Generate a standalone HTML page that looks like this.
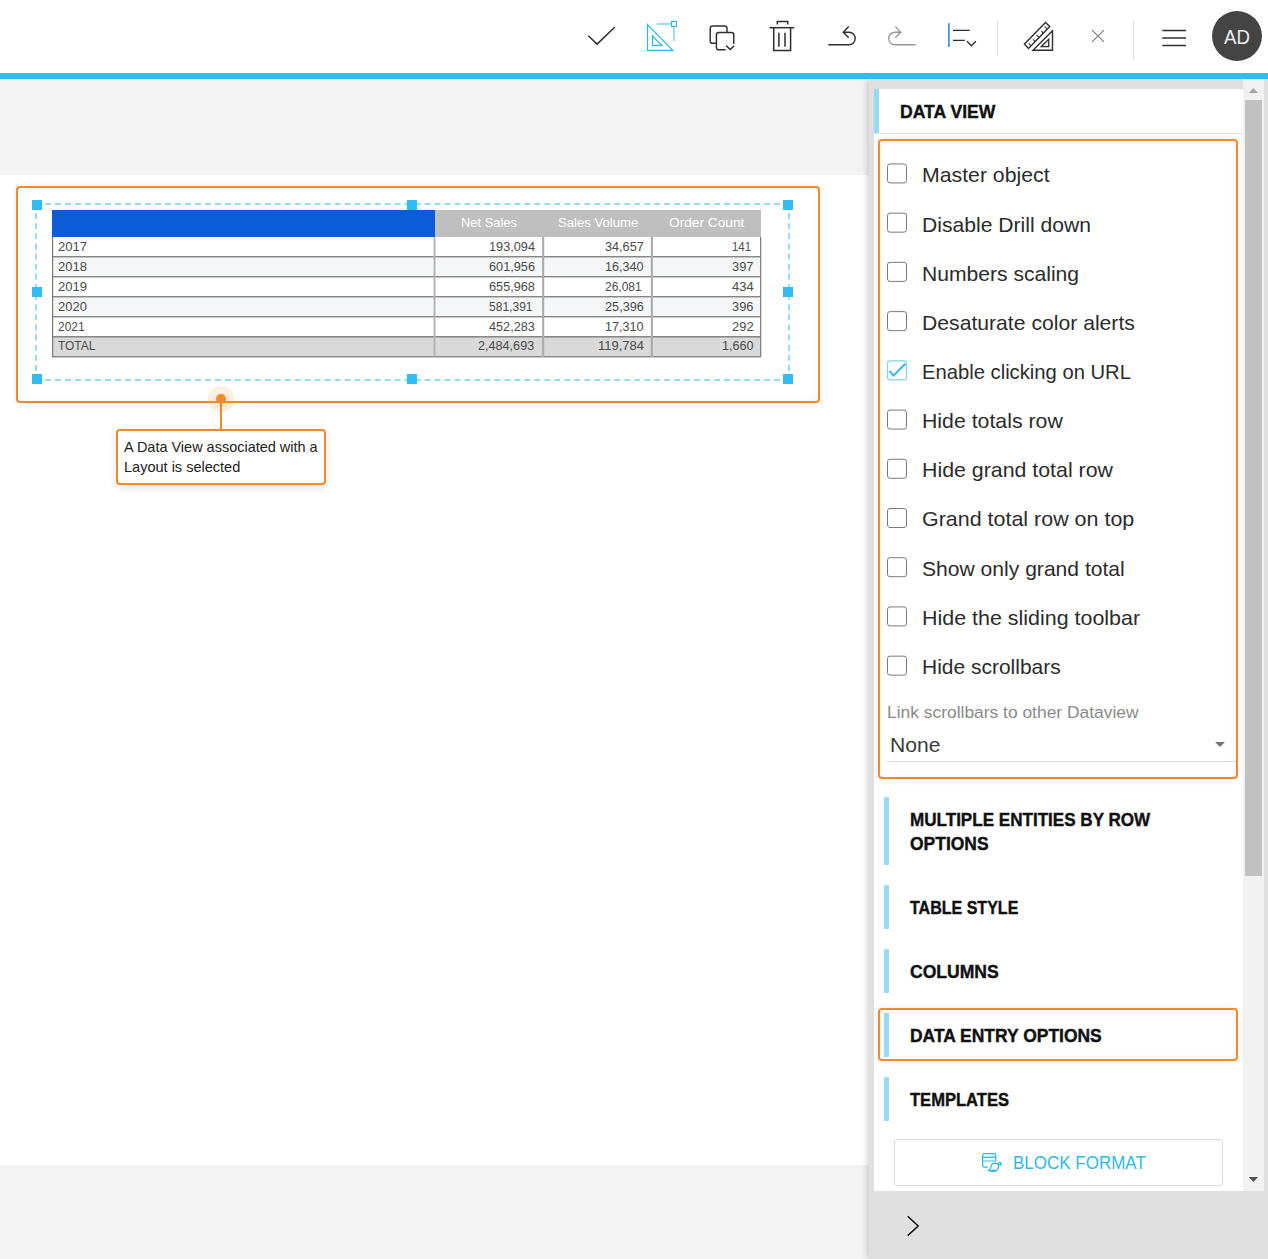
<!DOCTYPE html>
<html lang="en"><head><meta charset="utf-8"><title>Data View</title>
<style>
html,body{margin:0;padding:0;}
body{width:1268px;height:1259px;position:relative;overflow:hidden;background:#fff;font-family:"Liberation Sans",sans-serif;}
.t{position:absolute;white-space:nowrap;margin:0;padding:0;transform-origin:0 0;}
.a{position:absolute;}
svg{position:absolute;overflow:visible;}
</style></head><body>
<div class="a" style="left:0;top:79px;width:869px;height:96px;background:#f3f3f3"></div>
<div class="a" style="left:0;top:1165px;width:869px;height:94px;background:#f3f3f3"></div>
<div class="a" style="left:869px;top:79px;width:399px;height:1180px;background:#e0e0e0;box-shadow:-1px 0 7px rgba(0,0,0,0.22)"></div>
<div class="a" style="left:874px;top:89px;width:369px;height:1102px;background:#fff"></div>
<div class="a" style="left:1243px;top:79px;width:21px;height:1112px;background:#f1f1f1"></div>
<div class="a" style="left:1245px;top:100px;width:17px;height:776px;background:#c1c1c1"></div>
<svg style="left:1243px;top:79px" width="21" height="1112"><path d="M5.8 13.9 L15 13.9 L10.4 8.9 Z" fill="#a3a3a3"/><path d="M5.8 1098 L15 1098 L10.4 1103 Z" fill="#505050"/></svg>
<div class="a" style="left:0;top:0;width:1268px;height:73px;background:#fff"></div>
<div class="a" style="left:0;top:73px;width:1268px;height:6px;background:#2fbdf1"></div>
<svg style="left:0;top:0" width="1268" height="73" fill="none" stroke-linecap="butt">
<path d="M588.3 35.8 L597.1 44.1 L614.9 27" stroke="#2e2e2e" stroke-width="1.5"/>
<path d="M647.5 24.5 L647.5 50.45 L672.8 50.45 Z" stroke="#2fb8ea" stroke-width="1.2" stroke-linejoin="miter"/>
<path d="M652.4 36 L652.4 45.4 L661.8 45.4 Z" stroke="#2fb8ea" stroke-width="1.2"/>
<path d="M656.8 23.95 L671 23.95 M674 26.9 L674 41.1" stroke="#9adcf6" stroke-width="1.9"/>
<rect x="671.5" y="21.45" width="5" height="5" stroke="#2fb8ea" stroke-width="1.15"/>
<path d="M716.2 43.3 L712.6 43.3 Q710.2 43.3 710.2 40.9 L710.2 28.4 Q710.2 26 712.6 26 L724.6 26 Q727 26 727 28.4 L727 32" stroke="#2e2e2e" stroke-width="1.45"/>
<path d="M725.7 49.8 L718.8 49.8 Q716.4 49.8 716.4 47.4 L716.4 34.8 Q716.4 32.4 718.8 32.4 L731.4 32.4 Q733.8 32.4 733.8 34.8 L733.8 44" stroke="#2e2e2e" stroke-width="1.45"/>
<path d="M726 45.5 L730.2 49.6 L734.2 45.8" stroke="#2e2e2e" stroke-width="1.4"/>
<path d="M777.3 24.6 L777.3 21.6 L787.7 21.6 L787.7 24.6" stroke="#2e2e2e" stroke-width="1.5"/>
<path d="M769.4 27.7 L794.3 27.7" stroke="#2e2e2e" stroke-width="1.5"/>
<path d="M773.7 27.7 L773.7 50.4 L790.6 50.4 L790.6 27.7" stroke="#2e2e2e" stroke-width="1.5"/>
<path d="M778.9 32.7 L778.9 46.8 M785 32.7 L785 46.8" stroke="#2e2e2e" stroke-width="1.5"/>
<path d="M828.35 44.75 L848.9 44.75 A6.27 6.27 0 0 0 848.9 32.2 L843.8 32.2" stroke="#2e2e2e" stroke-width="1.4"/>
<path d="M848.7 26.6 L843.3 32.2 L848.7 37.8" stroke="#2e2e2e" stroke-width="1.4"/>
<path d="M915.7 44.75 L894.95 44.75 A6.27 6.27 0 0 1 894.95 32.2 L900.2 32.2" stroke="#969696" stroke-width="1.35"/>
<path d="M895.35 26.65 L900.75 32.15 L895.35 37.75" stroke="#969696" stroke-width="1.35"/>
<path d="M948.9 23.2 L948.9 47" stroke="#4a9ddd" stroke-width="1.9"/>
<path d="M953 30.35 L969.7 30.35 M953 40.4 L964.8 40.4" stroke="#2e2e2e" stroke-width="1.4"/>
<path d="M967 41.3 L971.4 45.7 L975.8 41.3" stroke="#2e2e2e" stroke-width="1.4"/>
<path d="M997.5 21 L997.5 56 M1133.5 21 L1133.5 60" stroke="#dcdcdc" stroke-width="1"/>
<path d="M1024.4 44.1 L1045.5 22.4 L1049.8 26.5 L1028.5 48.5 Z" stroke="#2e2e2e" stroke-width="1.4" stroke-linejoin="miter"/>
<path d="M1030.9 45.6 L1028.7 43.4 M1035.2 41.4 L1033 39.4 M1039 37.3 L1036.6 34.8 M1043.4 33.2 L1041.4 31.2 M1046.9 28.7 L1044.6 26.6" stroke="#2e2e2e" stroke-width="1.1"/>
<path d="M1033 50.3 L1052.5 50.3 L1052.5 30.8 Z" stroke="#2e2e2e" stroke-width="1.4"/>
<path d="M1041.2 46.7 L1048.7 46.7 L1048.7 39.2 Z" stroke="#2e2e2e" stroke-width="1.3"/>
<path d="M1092.1 30.1 L1103.9 41.9 M1103.9 30.1 L1092.1 41.9" stroke="#7c7c7c" stroke-width="1.1"/>
<path d="M1162.3 30.6 L1186 30.6 M1162.3 38 L1186 38 M1162.3 45.4 L1186 45.4" stroke="#2e2e2e" stroke-width="1.5"/>
<circle cx="1237" cy="36" r="25" fill="#444" stroke="none"/>
</svg>
<div class="t" style="left:1224.15px;top:22px;font-size:20.8px;line-height:29px;color:#ececec;transform:scaleX(0.8969);">AD</div>
<div class="a" style="left:874px;top:89px;width:5px;height:44px;background:#96daf5"></div>
<div class="a" style="left:874px;top:133px;width:369px;height:1px;background:#e4e4e4"></div>
<div class="t" style="left:899.76px;top:99px;font-size:18.7px;line-height:26px;font-weight:700;color:#111;transform:scaleX(0.9412);-webkit-text-stroke:0.4px #111;">DATA VIEW</div>
<div class="a" style="left:878px;top:139px;width:356px;height:636px;border:2px solid #f08a2d;border-radius:4px;box-shadow:0 0 8px rgba(0,0,0,0.08), inset 0 0 8px rgba(0,0,0,0.05)"></div>
<svg style="left:0;top:0" width="1268" height="800" fill="none">
<rect x="887.5" y="163.95" width="19" height="19" rx="2.5" stroke="#7a7a7a" stroke-width="1" fill="#fff"/>
<rect x="887.5" y="213.17" width="19" height="19" rx="2.5" stroke="#7a7a7a" stroke-width="1" fill="#fff"/>
<rect x="887.5" y="262.39" width="19" height="19" rx="2.5" stroke="#7a7a7a" stroke-width="1" fill="#fff"/>
<rect x="887.5" y="311.61" width="19" height="19" rx="2.5" stroke="#7a7a7a" stroke-width="1" fill="#fff"/>
<rect x="887.5" y="360.83" width="19" height="19" rx="2.5" stroke="#7fd4f4" stroke-width="1.2" fill="#fff"/>
<path d="M889.4 370.93 L893.5 375.63 L905.3 363.73" stroke="#2fb8ea" stroke-width="2"/>
<rect x="887.5" y="410.05" width="19" height="19" rx="2.5" stroke="#7a7a7a" stroke-width="1" fill="#fff"/>
<rect x="887.5" y="459.27" width="19" height="19" rx="2.5" stroke="#7a7a7a" stroke-width="1" fill="#fff"/>
<rect x="887.5" y="508.49" width="19" height="19" rx="2.5" stroke="#7a7a7a" stroke-width="1" fill="#fff"/>
<rect x="887.5" y="557.71" width="19" height="19" rx="2.5" stroke="#7a7a7a" stroke-width="1" fill="#fff"/>
<rect x="887.5" y="606.93" width="19" height="19" rx="2.5" stroke="#7a7a7a" stroke-width="1" fill="#fff"/>
<rect x="887.5" y="656.15" width="19" height="19" rx="2.5" stroke="#7a7a7a" stroke-width="1" fill="#fff"/>
</svg>
<div class="t" style="left:921.70px;top:160px;font-size:20.9px;line-height:29px;color:#2b2b2b;transform:scaleX(1.0176);">Master object</div>
<div class="t" style="left:921.71px;top:210px;font-size:20.9px;line-height:29px;color:#2b2b2b;transform:scaleX(1.0109);">Disable Drill down</div>
<div class="t" style="left:921.71px;top:259px;font-size:20.9px;line-height:29px;color:#2b2b2b;transform:scaleX(1.0094);">Numbers scaling</div>
<div class="t" style="left:921.71px;top:308px;font-size:20.9px;line-height:29px;color:#2b2b2b;transform:scaleX(1.0129);">Desaturate color alerts</div>
<div class="t" style="left:921.78px;top:357px;font-size:20.9px;line-height:29px;color:#2b2b2b;transform:scaleX(0.9673);">Enable clicking on URL</div>
<div class="t" style="left:921.70px;top:406px;font-size:20.9px;line-height:29px;color:#2b2b2b;transform:scaleX(1.0188);">Hide totals row</div>
<div class="t" style="left:921.69px;top:455px;font-size:20.9px;line-height:29px;color:#2b2b2b;transform:scaleX(1.0214);">Hide grand total row</div>
<div class="t" style="left:921.63px;top:504px;font-size:20.9px;line-height:29px;color:#2b2b2b;transform:scaleX(1.0269);">Grand total row on top</div>
<div class="t" style="left:921.55px;top:554px;font-size:20.9px;line-height:29px;color:#2b2b2b;transform:scaleX(1.0093);">Show only grand total</div>
<div class="t" style="left:921.68px;top:603px;font-size:20.9px;line-height:29px;color:#2b2b2b;transform:scaleX(1.0261);">Hide the sliding toolbar</div>
<div class="t" style="left:921.72px;top:652px;font-size:20.9px;line-height:29px;color:#2b2b2b;transform:scaleX(1.0044);">Hide scrollbars</div>
<div class="t" style="left:887.21px;top:700px;font-size:17.2px;line-height:24px;color:#8a8a8a;transform:scaleX(1.0127);">Link scrollbars to other Dataview</div>
<div class="t" style="left:889.51px;top:730px;font-size:20.9px;line-height:29px;color:#3a3a3a;transform:scaleX(1.0094);">None</div>
<div class="a" style="left:887px;top:761px;width:349px;height:1px;background:#d9d9d9"></div>
<svg style="left:1215px;top:741.5px" width="10" height="5"><path d="M0 0 L10 0 L5 5 Z" fill="#757575"/></svg>
<div class="a" style="left:878px;top:1008px;width:356px;height:49px;border:2px solid #f08a2d;border-radius:4px;box-shadow:0 0 8px rgba(0,0,0,0.08), inset 0 0 8px rgba(0,0,0,0.05)"></div>
<div class="a" style="left:884px;top:797px;width:5px;height:68px;background:#96daf5"></div>
<div class="t" style="left:909.89px;top:808px;font-size:18.2px;line-height:25px;font-weight:700;color:#111;transform:scaleX(0.9385);-webkit-text-stroke:0.4px #111;">MULTIPLE ENTITIES BY ROW</div>
<div class="t" style="left:910.10px;top:832px;font-size:18.2px;line-height:25px;font-weight:700;color:#111;transform:scaleX(0.9598);-webkit-text-stroke:0.4px #111;">OPTIONS</div>
<div class="a" style="left:884px;top:885px;width:5px;height:44px;background:#96daf5"></div>
<div class="t" style="left:909.94px;top:896px;font-size:18.2px;line-height:25px;font-weight:700;color:#111;transform:scaleX(0.8812);-webkit-text-stroke:0.4px #111;">TABLE STYLE</div>
<div class="a" style="left:884px;top:949px;width:5px;height:44px;background:#96daf5"></div>
<div class="t" style="left:909.70px;top:960px;font-size:18.2px;line-height:25px;font-weight:700;color:#111;transform:scaleX(0.9654);-webkit-text-stroke:0.4px #111;">COLUMNS</div>
<div class="a" style="left:884px;top:1013px;width:5px;height:44px;background:#96daf5"></div>
<div class="t" style="left:909.86px;top:1024px;font-size:18.2px;line-height:25px;font-weight:700;color:#111;transform:scaleX(0.9600);-webkit-text-stroke:0.4px #111;">DATA ENTRY OPTIONS</div>
<div class="a" style="left:884px;top:1077px;width:5px;height:44px;background:#96daf5"></div>
<div class="t" style="left:909.93px;top:1088px;font-size:18.2px;line-height:25px;font-weight:700;color:#111;transform:scaleX(0.9096);-webkit-text-stroke:0.4px #111;">TEMPLATES</div>
<div class="a" style="left:894px;top:1139px;width:327px;height:45px;border:1px solid #dcdcdc;border-radius:3px;background:#fff"></div>
<div class="t" style="left:1013.04px;top:1150px;font-size:18.7px;line-height:26px;color:#2fb8ea;transform:scaleX(0.9094);">BLOCK FORMAT</div>
<svg style="left:0;top:0" width="1268" height="1259" fill="none">
<path d="M987.8 1167.2 L984.4 1167.2 Q982.65 1167.2 982.65 1165.5 L982.65 1155.4 Q982.65 1153.65 984.4 1153.65 L994 1153.65 Q995.7 1153.65 995.7 1155.4 L995.7 1161.2" stroke="#2fb8ea" stroke-width="1.3"/>
<path d="M982.65 1157.2 L995.7 1157.2" stroke="#2fb8ea" stroke-width="1.3"/>
<path d="M982.65 1161 L995.7 1161" stroke="#6fcdf1" stroke-width="1.4"/>
<path d="M988.4 1170.5 Q990.8 1169.6 991 1166.8 Q991.3 1163.4 994.8 1163.1 Q997.6 1163 998.6 1165.2 Q999.2 1167.8 997.2 1169.9 Q994.4 1172.4 988.4 1170.5 Z" stroke="#2fb8ea" stroke-width="1.3" stroke-linejoin="round"/>
<path d="M989.4 1170.6 Q992.6 1169 996.4 1170.4 Q993 1172.2 989.4 1170.6 Z" fill="#2fb8ea" stroke="#2fb8ea" stroke-width="0.6"/>
<circle cx="999.7" cy="1163.7" r="1.35" stroke="#2fb8ea" stroke-width="1.2"/>
<path d="M1000.5 1162.8 L1001.4 1164.2 L1000.4 1165" stroke="#2fb8ea" stroke-width="1"/>
</svg>
<svg style="left:0;top:0" width="1268" height="1259"><path d="M907.7 1216.2 L918.2 1226 L907.7 1235.6" fill="none" stroke="#111" stroke-width="1.5"/></svg>
<div class="a" style="left:16px;top:186px;width:800px;height:213px;border:2px solid #f08a2d;border-radius:4px;box-shadow:0 0 8px rgba(0,0,0,0.08), inset 0 0 8px rgba(0,0,0,0.05)"></div>
<svg style="left:0;top:0" width="869" height="600">
<path d="M45.1 204 L783 204 M45.1 380 L783 380" stroke="#96daf5" stroke-width="2" stroke-dasharray="6 3.986" fill="none"/>
<path d="M36 213 L36 374 M789 213 L789 374" stroke="#96daf5" stroke-width="2" stroke-dasharray="6 4.133" fill="none"/>
<rect x="32" y="200" width="10" height="10" fill="#2fbdf1"/>
<rect x="407" y="200" width="10" height="10" fill="#2fbdf1"/>
<rect x="783" y="200" width="10" height="10" fill="#2fbdf1"/>
<rect x="32" y="287" width="10" height="10" fill="#2fbdf1"/>
<rect x="783" y="287" width="10" height="10" fill="#2fbdf1"/>
<rect x="32" y="374" width="10" height="10" fill="#2fbdf1"/>
<rect x="407" y="374" width="10" height="10" fill="#2fbdf1"/>
<rect x="783" y="374" width="10" height="10" fill="#2fbdf1"/>
</svg>
<div class="a" style="left:52px;top:210px;width:383px;height:27px;background:#0b5cd7"></div>
<div class="a" style="left:435px;top:210px;width:326px;height:27px;background:#bfbfbf"></div>
<div class="a" style="left:52px;top:237px;width:709px;height:20px;background:#fff"></div>
<div class="a" style="left:52px;top:257px;width:709px;height:20px;background:#f5f6f8"></div>
<div class="a" style="left:52px;top:277px;width:709px;height:20px;background:#fff"></div>
<div class="a" style="left:52px;top:297px;width:709px;height:20px;background:#f5f6f8"></div>
<div class="a" style="left:52px;top:317px;width:709px;height:20px;background:#fff"></div>
<div class="a" style="left:52px;top:337px;width:709px;height:20px;background:#d9d9d9"></div>
<div class="a" style="left:52px;top:256px;width:709px;height:1px;background:#858585;box-shadow:0 1px 0 rgba(0,0,0,0.2)"></div>
<div class="a" style="left:52px;top:276px;width:709px;height:1px;background:#858585;box-shadow:0 1px 0 rgba(0,0,0,0.2)"></div>
<div class="a" style="left:52px;top:296px;width:709px;height:1px;background:#858585;box-shadow:0 1px 0 rgba(0,0,0,0.2)"></div>
<div class="a" style="left:52px;top:316px;width:709px;height:1px;background:#858585;box-shadow:0 1px 0 rgba(0,0,0,0.2)"></div>
<div class="a" style="left:52px;top:336px;width:709px;height:1px;background:#858585;box-shadow:0 1px 0 rgba(0,0,0,0.2)"></div>
<div class="a" style="left:52px;top:356px;width:709px;height:1px;background:#858585;box-shadow:0 1px 0 rgba(0,0,0,0.2)"></div>
<svg style="left:0;top:0" width="869" height="400"><rect x="52" y="237" width="1.2" height="120" fill="#7a7a7a"/><rect x="433.6" y="237" width="1.8" height="120" fill="#b0b0b0"/><rect x="542.1" y="237" width="2.1" height="120" fill="#ababab"/><rect x="650.8" y="237" width="2.1" height="120" fill="#ababab"/><rect x="760" y="237" width="1.3" height="120" fill="#808080"/></svg>
<div class="t" style="left:461.37px;top:213px;font-size:13.6px;line-height:19px;color:#fff;transform:scaleX(0.9480);">Net Sales</div>
<div class="t" style="left:557.92px;top:213px;font-size:13.6px;line-height:19px;color:#fff;transform:scaleX(0.9654);">Sales Volume</div>
<div class="t" style="left:669.14px;top:213px;font-size:13.6px;line-height:19px;color:#fff;transform:scaleX(1.0076);">Order Count</div>
<div class="t" style="left:57.93px;top:237px;font-size:13.6px;line-height:19px;color:#4a4a4a;transform:scaleX(0.9604);">2017</div>
<div class="t" style="left:488.83px;top:237px;font-size:13.6px;line-height:19px;color:#4a4a4a;transform:scaleX(0.9369);">193,094</div>
<div class="t" style="left:605.19px;top:237px;font-size:13.6px;line-height:19px;color:#4a4a4a;transform:scaleX(0.9317);">34,657</div>
<div class="t" style="left:732.41px;top:237px;font-size:13.6px;line-height:19px;color:#4a4a4a;transform:scaleX(0.8388);">141</div>
<div class="t" style="left:57.93px;top:257px;font-size:13.6px;line-height:19px;color:#4a4a4a;transform:scaleX(0.9560);">2018</div>
<div class="t" style="left:488.69px;top:257px;font-size:13.6px;line-height:19px;color:#4a4a4a;transform:scaleX(0.9355);">601,956</div>
<div class="t" style="left:605.27px;top:257px;font-size:13.6px;line-height:19px;color:#4a4a4a;transform:scaleX(0.9271);">16,340</div>
<div class="t" style="left:732.23px;top:257px;font-size:13.6px;line-height:19px;color:#4a4a4a;transform:scaleX(0.9457);">397</div>
<div class="t" style="left:57.93px;top:277px;font-size:13.6px;line-height:19px;color:#4a4a4a;transform:scaleX(0.9582);">2019</div>
<div class="t" style="left:488.69px;top:277px;font-size:13.6px;line-height:19px;color:#4a4a4a;transform:scaleX(0.9342);">655,968</div>
<div class="t" style="left:605.03px;top:277px;font-size:13.6px;line-height:19px;color:#4a4a4a;transform:scaleX(0.8820);">26,081</div>
<div class="t" style="left:732.10px;top:277px;font-size:13.6px;line-height:19px;color:#4a4a4a;transform:scaleX(0.9566);">434</div>
<div class="t" style="left:57.93px;top:297px;font-size:13.6px;line-height:19px;color:#4a4a4a;transform:scaleX(0.9559);">2020</div>
<div class="t" style="left:488.98px;top:297px;font-size:13.6px;line-height:19px;color:#4a4a4a;transform:scaleX(0.8858);">581,391</div>
<div class="t" style="left:605.00px;top:297px;font-size:13.6px;line-height:19px;color:#4a4a4a;transform:scaleX(0.9348);">25,396</div>
<div class="t" style="left:732.24px;top:297px;font-size:13.6px;line-height:19px;color:#4a4a4a;transform:scaleX(0.9427);">396</div>
<div class="t" style="left:57.98px;top:317px;font-size:13.6px;line-height:19px;color:#4a4a4a;transform:scaleX(0.8839);">2021</div>
<div class="t" style="left:488.62px;top:317px;font-size:13.6px;line-height:19px;color:#4a4a4a;transform:scaleX(0.9341);">452,283</div>
<div class="t" style="left:605.27px;top:317px;font-size:13.6px;line-height:19px;color:#4a4a4a;transform:scaleX(0.9271);">17,310</div>
<div class="t" style="left:732.04px;top:317px;font-size:13.6px;line-height:19px;color:#4a4a4a;transform:scaleX(0.9518);">292</div>
<div class="t" style="left:57.83px;top:336px;font-size:13.5px;line-height:19px;color:#4a4a4a;transform:scaleX(0.8825);">TOTAL</div>
<div class="t" style="left:477.95px;top:336px;font-size:13.6px;line-height:19px;color:#4a4a4a;transform:scaleX(0.9288);">2,484,693</div>
<div class="t" style="left:597.81px;top:336px;font-size:13.6px;line-height:19px;color:#4a4a4a;transform:scaleX(0.9573);">119,784</div>
<div class="t" style="left:721.71px;top:336px;font-size:13.6px;line-height:19px;color:#4a4a4a;transform:scaleX(0.9244);">1,660</div>
<div class="a" style="left:208px;top:386px;width:26px;height:26px;border-radius:13px;background:rgba(240,138,45,0.15)"></div>
<div class="a" style="left:216px;top:394px;width:10px;height:10px;border-radius:5px;background:#f08a2d"></div>
<div class="a" style="left:220px;top:399px;width:2px;height:31px;background:#f08a2d"></div>
<div class="a" style="left:116px;top:429px;width:206px;height:52px;border:2px solid #f08a2d;border-radius:4px;background:#fff;box-shadow:0 2px 8px rgba(0,0,0,0.13)"></div>
<div class="t" style="left:123.90px;top:437px;font-size:14.8px;line-height:21px;color:#222;transform:scaleX(0.9782);">A Data View associated with a</div>
<div class="t" style="left:123.68px;top:457px;font-size:14.8px;line-height:21px;color:#222;transform:scaleX(0.9816);">Layout is selected</div>
</body></html>
